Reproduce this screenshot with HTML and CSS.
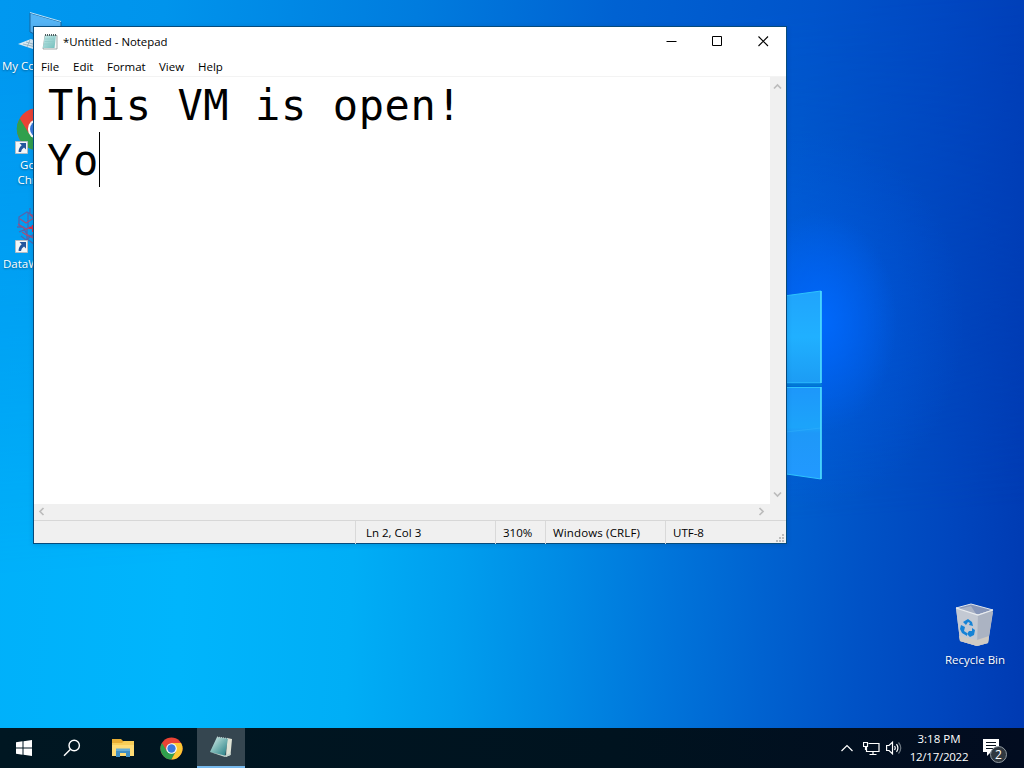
FILE: index.html
```html
<!DOCTYPE html>
<html lang="en">
<head>
  <meta charset="UTF-8">
  <meta name="viewport" content="width=device-width, initial-scale=1.0">
  <title>Desktop</title>
  <link rel="stylesheet" href="styles.css">
</head>
<body>
  <main class="desktop">
    <svg class="wallpaper-logo" width="112" height="194" viewBox="0 0 112 194">
      <defs>
        <linearGradient id="pane-top" x1="0" y1="0" x2="0" y2="1">
          <stop offset="0" stop-color="#20a4fc"/>
          <stop offset=".5" stop-color="#20b0ff"/>
          <stop offset="1" stop-color="#1c9cf4"/>
        </linearGradient>
        <linearGradient id="pane-bottom" x1="0" y1="0" x2="0" y2="1">
          <stop offset="0" stop-color="#1d97fa"/>
          <stop offset=".44" stop-color="#1ca4fa"/>
          <stop offset=".5" stop-color="#1e98f8"/>
          <stop offset="1" stop-color="#2299ff"/>
        </linearGradient>
      </defs>
      <path d="M0 17 111 2V94H0z" fill="url(#pane-top)"/>
      <path d="M0 98H111V190L0 174z" fill="url(#pane-bottom)"/>
      <path d="M0 17 111 2M0 94H111M0 98.500H111M0 174 111 190" fill="none" stroke="#2ec4fc"/>
      <path d="M76 143 111 139" stroke="#32b2fb" stroke-opacity=".5"/>
      <path d="M111 2V94M111 98V190" stroke="#4fe0ff" stroke-width="1.600"/>
      <path d="M0 96H112" stroke="#0079d4" stroke-width="3"/>
    </svg>

    <div class="icon my-computer">
      <svg width="48" height="42" viewBox="0 0 48 42">
        <path d="M16 3 47 12V36L16 22z" fill="#55b4f5" stroke="#19679f"/>
        <path d="M16 2.500 47 11.500" stroke="#b9e3fc"/>
        <path d="M4 34 17 29 34 36 22 40z" fill="#d5e9f3"/>
        <path d="M9 34 26 38M12 32 29 37M16 30 13 37" stroke="#87a8ba" stroke-width=".8"/>
      </svg>
      <span>My Computer</span>
    </div>
    <div class="icon chrome-shortcut">
      <svg width="48" height="50" viewBox="0 0 48 50">
        <use href="#chrome" x="2" y="1" width="44" height="44"/>
        <use href="#shortcut" x="1" y="35" width="13" height="13"/>
      </svg>
      <span>Google Chrome</span>
    </div>
    <div class="icon data-shortcut">
      <svg width="48" height="50" viewBox="0 0 48 50">
        <g fill="none" stroke="#5265ad" stroke-width="1.300">
          <path d="M5 12l8-5 7 4v9l-8 4-7-4zM13 24v10l7 5M5 27l7-3M16 3v7l8 5M3 22h6l5 9h9M14 7v17M7 31l5 4 8-6"/>
        </g>
        <path d="M6 14l6 4 8-5M4 19l8 5 9-3M12 29l9 5M16 9l4 4M8 27l6 4" fill="none" stroke="#a0527d" stroke-width="1.300"/>
        <path d="M15 23h5M19 20v7" stroke="#dd2f48" stroke-width="2"/>
        <use href="#shortcut" x="1" y="35" width="13" height="13"/>
      </svg>
      <span>DataWatcher</span>
    </div>
    <div class="icon recycle-bin">
      <svg width="48" height="48" viewBox="0 0 48 48">
        <path d="M5 7 22 17 42 11 37 42 26 45 9 40z" fill="#c5c8cc"/>
        <path d="M5 7 20 3 42 9 27 14z" fill="#8796b8" stroke="#e1e6ed"/>
        <path d="M7 8 20 5 25 13z" fill="#a9b2c5"/>
        <path d="M5 7 27 14 26 45 9 40z" fill="#c3c9d3"/>
        <path d="M27 14 42 9 37 42 26 45z" fill="#abb3c2"/>
        <path d="M8 35 26 39 38 35 37 42 26 45 9 40z" fill="#d0cbc3"/>
        <path d="M5 7 27 14 42 9" fill="none" stroke="#e9ecef" stroke-width="1.300"/>
        <path d="M12 21l5-3 4 3 1 4-4-1 1-2-2-1-2 3zM10 24l4 2-1 4 3 2v3l-5-3-2-4zM18 30l3 0 0-3 3 2-1 5-4 2-3-3z" fill="#1583d6"/>
      </svg>
      <span>Recycle Bin</span>
    </div>

    <section class="window">
      <header class="titlebar">
        <svg width="16" height="18" viewBox="0 0 16 18">
          <defs>
            <linearGradient id="page" x1="0" y1="0" x2="1" y2="1">
              <stop offset="0" stop-color="#c8ebe9"/>
              <stop offset="1" stop-color="#6fbdbb"/>
            </linearGradient>
          </defs>
          <path d="M3 2.500H15V16L1 16z" fill="#f5f7f7" stroke="#8b9798" stroke-width=".8"/>
          <path d="M3 2.500H14L12.500 15H.8z" fill="url(#page)"/>
          <path d="M3 6h10M2.600 8.500h10M2.200 11h10" stroke="#8dc9c7" stroke-width=".7"/>
          <path d="M3 2H14.500" stroke="#4b5f61" stroke-width="2" stroke-dasharray="1 1"/>
        </svg>
        <h1>*Untitled - Notepad</h1>
        <div class="controls">
          <svg width="11" height="11" viewBox="0 0 11 11"><path d="M.5 5.500H10.500" stroke="#000"/></svg>
          <svg width="11" height="11" viewBox="0 0 11 11"><path d="M.5.5H9.500V9.500H.5z" fill="none" stroke="#000"/></svg>
          <svg width="11" height="11" viewBox="0 0 11 11"><path d="M.5.5 10 10M10 .5.5 10" stroke="#000" stroke-width="1.100"/></svg>
        </div>
      </header>
      <nav class="menu">
        <span class="file">File</span>
        <span class="edit">Edit</span>
        <span class="format">Format</span>
        <span class="view">View</span>
        <span class="help">Help</span>
      </nav>
      <div class="editor">
        <div class="text">
          <p>This VM is open!</p>
          <p class="typing">Yo<i class="caret"></i></p>
        </div>
        <div class="scroll-v">
          <svg width="9" height="7" viewBox="0 0 9 7"><path d="M1 5.500 4.500 2 8 5.500"/></svg>
          <svg width="9" height="7" viewBox="0 0 9 7"><path d="M1 1.500 4.500 5 8 1.500"/></svg>
        </div>
      </div>
      <div class="scroll-h">
        <svg width="7" height="9" viewBox="0 0 7 9"><path d="M5.500 1 2 4.500 5.500 8"/></svg>
        <svg width="7" height="9" viewBox="0 0 7 9"><path d="M1.500 1 5 4.500 1.500 8"/></svg>
      </div>
      <footer class="status">
        <span></span>
        <span class="position">Ln 2, Col 3</span>
        <span>310%</span>
        <span class="eol">Windows (CRLF)</span>
        <span>UTF-8</span>
        <svg class="grip" width="9" height="9" viewBox="0 0 9 9"><path d="M6 0h2v2H6zM3 3h2v2H3zM6 3h2v2H6zM0 6h2v2H0zM3 6h2v2H3zM6 6h2v2H6z" fill="#bdbdbd"/></svg>
      </footer>
    </section>
  </main>

  <footer class="taskbar">
    <div class="task">
      <svg width="16" height="16" viewBox="0 0 16 16"><path d="M0 2.200 6.500 1.300V7.500H0zM7.500 1.200 16 0V7.500H7.500zM0 8.500H6.500V14.700L0 13.800zM7.500 8.500H16V16L7.500 14.800z" fill="#fff"/></svg>
    </div>
    <div class="task">
      <svg width="18" height="18" viewBox="0 0 18 18"><circle cx="11.200" cy="6.500" r="5.200" fill="none" stroke="#fff" stroke-width="1.400"/><path d="M7.500 10.200 1 16.700" stroke="#fff" stroke-width="1.500"/></svg>
    </div>
    <div class="task explorer">
      <svg width="22" height="18" viewBox="0 0 22 18">
        <path d="M0 0H9L11 2H21V17H0z" fill="#e8ad34"/>
        <path d="M0 4H22V17H0z" fill="#ffdc75"/>
        <path d="M0 4 10 4 12 2H22V6H0z" fill="#f8ce58"/>
        <path d="M4 10H18V18H14V14H8V18H4z" fill="#3f8fc4"/>
        <path d="M4 9.500H18V12H4z" fill="#65acd6"/>
      </svg>
    </div>
    <div class="task">
      <svg width="23" height="23" viewBox="0 0 48 48">
        <defs>
          <symbol id="chrome" viewBox="0 0 48 48">
            <circle cx="24" cy="24" r="23" fill="#ea4335"/>
            <path d="M4.080 12.500A23 23 0 0 0 24 47L33.500 29.500 24 24 14.500 29.500z" fill="#30a04d"/>
            <path d="M24 47A23 23 0 0 0 43.920 12.500H24L33.500 29.500z" fill="#fcc934"/>
            <circle cx="24" cy="24" r="11" fill="#fff"/>
            <circle cx="24" cy="24" r="8.700" fill="#3979dd"/>
          </symbol>
          <symbol id="shortcut" viewBox="0 0 13 13">
            <path d="M.5.5H12.500V12.500H.5z" fill="#f3f6f8" stroke="#b2bdc5"/>
            <path d="M4.500 2H11V8.500L9 6.500Q6.300 8 6 11H3.600Q3.300 7.300 6.700 4.300z" fill="#24569d"/>
          </symbol>
        </defs>
        <use href="#chrome" width="48" height="48"/>
      </svg>
    </div>
    <div class="task active">
      <svg width="24" height="24" viewBox="0 0 24 24">
        <defs>
          <linearGradient id="note" x1="0" y1="0" x2="1" y2="1">
            <stop offset="0" stop-color="#e0f1ef"/>
            <stop offset=".45" stop-color="#81bbb9"/>
            <stop offset="1" stop-color="#1d7880"/>
          </linearGradient>
        </defs>
        <path d="M18 3 23 4 21.500 20 17 22z" fill="#dfe4d6"/>
        <path d="M8 2 19 3.500 16 21 1 17z" fill="url(#note)"/>
        <path d="M1 17 16 20.500 21.500 18V20L16 22z" fill="#c2d5cf"/>
        <path d="M8 2 19 3.500" stroke="#c7d6d5" stroke-dasharray="1 1"/>
      </svg>
    </div>
    <div class="tray">
      <svg width="12" height="8" viewBox="0 0 12 8"><path d="M.5 7 6 1.500 11.500 7"/></svg>
      <svg class="network" width="17" height="15" viewBox="0 0 17 15"><path d="M5.500 2.500H16V10.500H3.500V6M10 10.500V14M6.500 13.500H13.500M.5 1.500H4.500V5.500H.5zM2.500 5.500V9"/></svg>
      <svg class="sound" width="16" height="14" viewBox="0 0 16 14"><path d="M.6 4.500H3L6.500 1.200V12.800L3 9.500H.6zM8.500 5Q10 7 8.500 9M10.500 3.200Q13.300 7 10.500 10.800"/><path class="faint" d="M12.500 1.500Q17 7 12.500 12.500"/></svg>
      <div class="clock">
        <span>3:18 PM</span>
        <span class="date">12/17/2022</span>
      </div>
      <div class="notifications">
        <svg width="17" height="17" viewBox="0 0 17 17"><path d="M0 0H16V13H8L4 17V13H0z" fill="#fff"/><path d="M3 3.500H13M3 6.500H13M3 9.500H10" stroke="#091420"/></svg>
        <b>2</b>
      </div>
    </div>
  </footer>
</body>
</html>
```

FILE: styles.css
```css
* {
  box-sizing: border-box;
}
body {
  margin: 0;
  height: 768px;
  display: flex;
  flex-direction: column;
  overflow: hidden;
  font-family: "Open Sans", "Noto Sans", sans-serif;
  font-size: 11.500px;
  color: #000;
}
.desktop {
  position: relative;
  isolation: isolate;
  flex: 1;
  background: linear-gradient(93deg, #00b0fa 0%, #00b5fc 20%, #00aef6 36%, #009eee 46%, #008ae4 56%, #0074da 66%, #0062d0 75%, #0052c6 84%, #0046be 92%, #003ab2 100%);
}
/* darker upper half of the wallpaper */
.desktop::before {
  content: "";
  position: absolute;
  inset: 0;
  z-index: -1;
  background: linear-gradient(96deg, #0098f0 0%, #0094ec 15%, #007cde 38%, #0062d2 56%, #0054cb 74%, #0047c1 86%, #0038b0 100%);
  mask-image: linear-gradient(176deg, #000 8%, rgba(0, 0, 0, 0.6) 38%, transparent 72%);
}
/* light around the logo */
.desktop::after {
  content: "";
  position: absolute;
  inset: 0;
  z-index: -1;
  background:
    radial-gradient(ellipse 75px 110px at 822px 322px, rgba(0, 106, 255, 0.85), rgba(0, 104, 255, 0.4) 50%, rgba(0, 102, 255, 0)),
    radial-gradient(ellipse 160px 190px at 805px 320px, rgba(0, 104, 255, 0.55), rgba(0, 98, 245, 0.22) 55%, rgba(0, 92, 230, 0));
}
.wallpaper-logo {
  position: absolute;
  left: 710px;
  top: 289px;
}

/* desktop icons */
.icon {
  position: absolute;
  width: 75px;
  display: flex;
  flex-direction: column;
  align-items: center;
  color: #fff;
  line-height: 15px;
  text-align: center;
  text-shadow: 0 1px 2px rgba(0, 0, 0, 0.4);
}
.my-computer {
  left: 0;
  top: 10px;
}
.my-computer span {
  margin: 6px 0 0 2px;
  white-space: nowrap;
}
.chrome-shortcut {
  left: 0;
  top: 106px;
}
.chrome-shortcut span {
  width: 50px;
  margin: 1px 0 0 3px;
}
.data-shortcut {
  left: 0;
  top: 205px;
}
.data-shortcut span {
  margin: 1px 0 0 1px;
}
.recycle-bin {
  left: 937px;
  top: 601px;
}
.recycle-bin span {
  margin: 3px 0 0 1px;
}

/* notepad window */
.window {
  position: absolute;
  left: 33px;
  top: 26px;
  width: 754px;
  height: 518px;
  display: flex;
  flex-direction: column;
  background: #fff;
  border: 1px solid #064b7c;
  box-shadow: 0 1px 5px rgba(0, 20, 60, 0.15);
}
.titlebar {
  height: 29px;
  display: flex;
  align-items: center;
  padding-left: 8px;
}
.titlebar h1 {
  margin: 0 0 0 5px;
  font-size: 11.400px;
  font-weight: normal;
}
.controls {
  display: flex;
  gap: 35px;
  margin-left: auto;
  padding-right: 17px;
}
.menu {
  height: 21px;
  display: flex;
  line-height: 21px;
  padding-left: 7px;
}
.menu span {
  white-space: nowrap;
}
.file {
  width: 32px;
}
.edit {
  width: 34px;
}
.format {
  width: 52px;
}
.view {
  width: 39px;
}
.editor {
  flex: 1;
  display: flex;
  border-top: 1px solid #f3f3f3;
  margin-top: -1px;
}
.text {
  flex: 1;
  padding: 0 0 0 14px;
  font-family: "DejaVu Sans Mono", monospace;
  font-size: 42px;
  line-height: 57px;
  letter-spacing: 0.600px;
}
.text p {
  margin: 0;
  display: flex;
  height: 55px;
}
.text .typing {
  margin-left: -1px;
}
.caret {
  width: 1px;
  height: 55px;
  background: #000;
}
.scroll-v {
  width: 16px;
  display: flex;
  flex-direction: column;
  justify-content: space-between;
  align-items: center;
  padding: 6px 2px 6px 0;
  background: #f0f0f0;
}
.scroll-h {
  height: 16px;
  display: flex;
  justify-content: space-between;
  align-items: center;
  padding: 0 21px 1px 4px;
  background: #f0f0f0;
}
.scroll-v path, .scroll-h path {
  fill: none;
  stroke: #bcbcbc;
  stroke-width: 1.700;
}
.status {
  position: relative;
  height: 23px;
  display: grid;
  grid-template-columns: 321px 140px 50px 120px 1fr;
  line-height: 23px;
  background: #f0f0f0;
  border-top: 1px solid #d7d7d7;
}
.status span {
  padding-left: 7px;
}
.status span + span {
  border-left: 1px solid #d9d9d9;
}
.status .position {
  padding-left: 10px;
}
.status .eol {
  letter-spacing: 0.150px;
}
.grip {
  position: absolute;
  right: 1px;
  bottom: 0;
}

/* taskbar */
.taskbar {
  height: 40px;
  display: flex;
  background: linear-gradient(90deg, #001722, #00131f 60%, #020c20);
  color: #fff;
}
.task {
  width: 48px;
  display: flex;
  align-items: center;
  justify-content: center;
}
.explorer {
  margin-left: 3px;
}
.task.active {
  width: 48px;
  margin-left: 2px;
  background: #354650;
  border-bottom: 2px solid #76b9ed;
}
.tray {
  flex: 1;
  display: flex;
  align-items: center;
  justify-content: flex-end;
  padding-right: 16px;
}
.tray > svg {
  fill: none;
  stroke: #fff;
  stroke-width: 1.200;
}
.network {
  margin-left: 10px;
}
.sound {
  margin-left: 6px;
}
.faint {
  stroke: #6c7780;
}
.clock {
  width: 74px;
  display: flex;
  flex-direction: column;
  align-items: center;
  margin-right: 7px;
  line-height: 18px;
}
.date {
  letter-spacing: -0.250px;
}
.notifications {
  position: relative;
  width: 25px;
  height: 18px;
}
.notifications b {
  position: absolute;
  left: 7px;
  top: 7px;
  width: 17px;
  height: 17px;
  border: 1px solid #929ba2;
  border-radius: 50%;
  background: #303840;
  font-size: 12px;
  font-weight: normal;
  line-height: 15px;
  text-align: center;
}
```
